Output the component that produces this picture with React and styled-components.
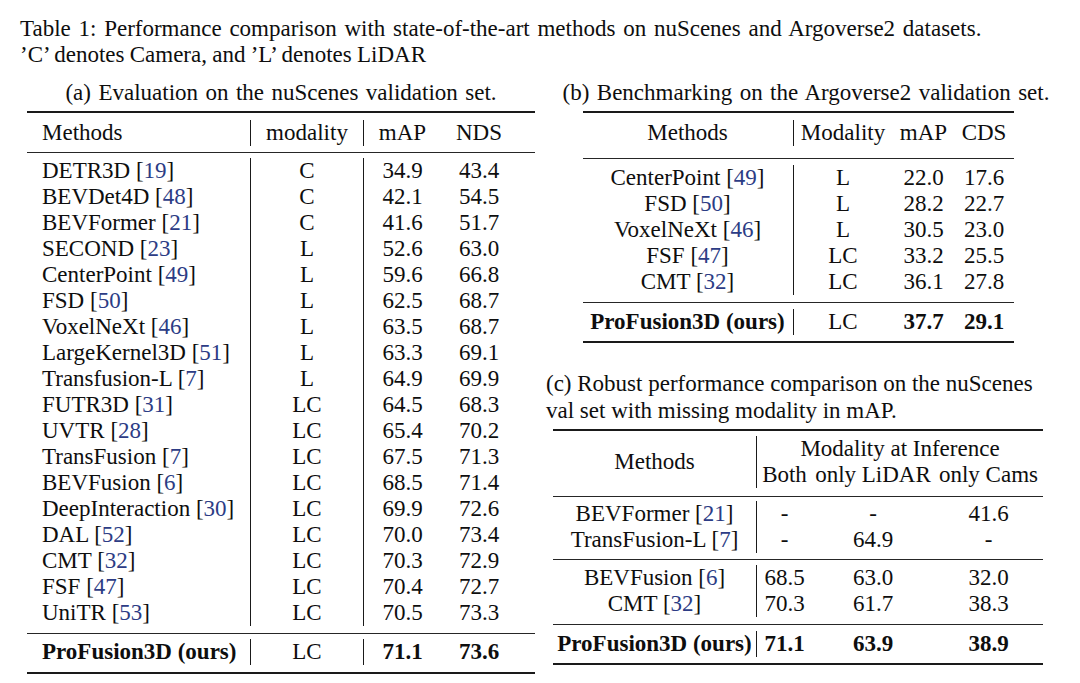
import React from 'react';
import styled, { createGlobalStyle } from 'styled-components';

const Global = createGlobalStyle`
  *, *::before, *::after { box-sizing: border-box; }
  html, body { margin: 0; padding: 0; background: #ffffff; }
  body {
    font-family: "Liberation Serif", "Times New Roman", serif;
    color: #0e0e0e;
    font-size: 23px;
    line-height: 26px;
  }
`;

const Page = styled.main`
  width: 1080px;
  height: 683px;
  padding: 16px 0 0 20px;
  overflow: hidden;
`;

const MainCaption = styled.div`
  margin: 0;
  white-space: nowrap;
`;

const CaptionLine = styled.div`
  word-spacing: ${p => p.$ws || 0}px;
`;

const Panels = styled.div`
  display: flex;
  align-items: flex-start;
  margin-top: 12px;
`;

const Panel = styled.section`
  width: ${p => p.$w}px;
  margin-left: ${p => p.$ml}px;
  display: flex;
  flex-direction: column;
  align-items: center;
`;

const SubCaption = styled.div`
  margin: ${p => p.$mt || 0}px 0 5px ${p => p.$ml || 0}px;
  white-space: nowrap;
  word-spacing: ${p => p.$ws || 0}px;
  line-height: ${p => p.$lh || 26}px;
  text-align: ${p => (p.$left ? 'left' : 'center')};
  align-self: ${p => (p.$left ? 'flex-start' : 'center')};
`;

const Table = styled.div`
  width: ${p => p.$w}px;
  border-top: 2px solid #1a1a1a;
  border-bottom: 2px solid #1a1a1a;
`;

const Section = styled.div`
  padding: ${p => p.$pt}px 0 ${p => p.$pb}px;
  & + & {
    border-top: 1px solid #262626;
  }
`;

const Row = styled.div`
  display: grid;
  grid-template-columns: ${p => p.$cols};
`;

const Cell = styled.div`
  white-space: nowrap;
  text-align: ${p => p.$align || 'center'};
  padding-left: ${p => p.$pl || 0}px;
  padding-right: ${p => p.$pr || 0}px;
  border-left: ${p => (p.$bar ? '1px solid #1a1a1a' : '0')};
  font-weight: ${p => (p.$bold ? 700 : 400)};
  grid-column: ${p => p.$col || 'auto'};
  grid-row: ${p => p.$row || 'auto'};
  align-self: ${p => p.$valign || 'stretch'};
`;

const Cite = styled.span`
  color: #2c3c85;
`;

const Method = ({ name, cite }) => (
  <>
    {name}
    {cite && (
      <>
        {' ['}
        <Cite>{cite}</Cite>
        {']'}
      </>
    )}
  </>
);

const nuScenes = [
  ['DETR3D', '19', 'C', '34.9', '43.4'],
  ['BEVDet4D', '48', 'C', '42.1', '54.5'],
  ['BEVFormer', '21', 'C', '41.6', '51.7'],
  ['SECOND', '23', 'L', '52.6', '63.0'],
  ['CenterPoint', '49', 'L', '59.6', '66.8'],
  ['FSD', '50', 'L', '62.5', '68.7'],
  ['VoxelNeXt', '46', 'L', '63.5', '68.7'],
  ['LargeKernel3D', '51', 'L', '63.3', '69.1'],
  ['Transfusion-L', '7', 'L', '64.9', '69.9'],
  ['FUTR3D', '31', 'LC', '64.5', '68.3'],
  ['UVTR', '28', 'LC', '65.4', '70.2'],
  ['TransFusion', '7', 'LC', '67.5', '71.3'],
  ['BEVFusion', '6', 'LC', '68.5', '71.4'],
  ['DeepInteraction', '30', 'LC', '69.9', '72.6'],
  ['DAL', '52', 'LC', '70.0', '73.4'],
  ['CMT', '32', 'LC', '70.3', '72.9'],
  ['FSF', '47', 'LC', '70.4', '72.7'],
  ['UniTR', '53', 'LC', '70.5', '73.3'],
];

const argo = [
  ['CenterPoint', '49', 'L', '22.0', '17.6'],
  ['FSD', '50', 'L', '28.2', '22.7'],
  ['VoxelNeXt', '46', 'L', '30.5', '23.0'],
  ['FSF', '47', 'LC', '33.2', '25.5'],
  ['CMT', '32', 'LC', '36.1', '27.8'],
];

const robustGroups = [
  [
    ['BEVFormer', '21', '-', '-', '41.6'],
    ['TransFusion-L', '7', '-', '64.9', '-'],
  ],
  [
    ['BEVFusion', '6', '68.5', '63.0', '32.0'],
    ['CMT', '32', '70.3', '61.7', '38.3'],
  ],
];

const COLS_A = '223px 113px 78px 94px';
const COLS_B = '210px 100px 62px 59px';
const COLS_C = '203px 56px 122px 109px';

const TableA = () => (
  <Table $w={508}>
    <Section $pt={7} $pb={6}>
      <Row $cols={COLS_A}>
        <Cell $align="left" $pl={15}>Methods</Cell>
        <Cell $bar>modality</Cell>
        <Cell $bar>mAP</Cell>
        <Cell $pr={18}>NDS</Cell>
      </Row>
    </Section>
    <Section $pt={5} $pb={7}>
      {nuScenes.map(([name, cite, mod, map, nds]) => (
        <Row $cols={COLS_A} key={name + cite}>
          <Cell $align="left" $pl={15}><Method name={name} cite={cite} /></Cell>
          <Cell $bar>{mod}</Cell>
          <Cell $bar>{map}</Cell>
          <Cell $pr={18}>{nds}</Cell>
        </Row>
      ))}
    </Section>
    <Section $pt={5} $pb={7}>
      <Row $cols={COLS_A}>
        <Cell $align="left" $pl={15} $bold>ProFusion3D (ours)</Cell>
        <Cell $bar>LC</Cell>
        <Cell $bar $bold>71.1</Cell>
        <Cell $pr={18} $bold>73.6</Cell>
      </Row>
    </Section>
  </Table>
);

const TableB = () => (
  <Table $w={431}>
    <Section $pt={7} $pb={12}>
      <Row $cols={COLS_B}>
        <Cell>Methods</Cell>
        <Cell $bar>Modality</Cell>
        <Cell>mAP</Cell>
        <Cell>CDS</Cell>
      </Row>
    </Section>
    <Section $pt={6} $pb={7}>
      {argo.map(([name, cite, mod, map, cds]) => (
        <Row $cols={COLS_B} key={name}>
          <Cell><Method name={name} cite={cite} /></Cell>
          <Cell $bar>{mod}</Cell>
          <Cell>{map}</Cell>
          <Cell>{cds}</Cell>
        </Row>
      ))}
    </Section>
    <Section $pt={6} $pb={6}>
      <Row $cols={COLS_B}>
        <Cell $bold>ProFusion3D (ours)</Cell>
        <Cell $bar>LC</Cell>
        <Cell $bold>37.7</Cell>
        <Cell $bold>29.1</Cell>
      </Row>
    </Section>
  </Table>
);

const TableC = () => (
  <Table $w={490}>
    <Section $pt={5} $pb={8}>
      <Row $cols={COLS_C}>
        <Cell $row="1 / 3" $valign="center">Methods</Cell>
        <Cell $bar $col="2 / 5">Modality at Inference</Cell>
        <Cell $bar>Both</Cell>
        <Cell>only LiDAR</Cell>
        <Cell>only Cams</Cell>
      </Row>
    </Section>
    {robustGroups.map((group, gi) => (
      <Section $pt={gi === 0 ? 4 : 5} $pb={gi === 0 ? 6 : 7} key={gi}>
        {group.map(([name, cite, both, lidar, cams]) => (
          <Row $cols={COLS_C} key={name}>
            <Cell><Method name={name} cite={cite} /></Cell>
            <Cell $bar>{both}</Cell>
            <Cell>{lidar}</Cell>
            <Cell>{cams}</Cell>
          </Row>
        ))}
      </Section>
    ))}
    <Section $pt={6} $pb={6}>
      <Row $cols={COLS_C}>
        <Cell $bold>ProFusion3D (ours)</Cell>
        <Cell $bar $bold>71.1</Cell>
        <Cell $bold>63.9</Cell>
        <Cell $bold>38.9</Cell>
      </Row>
    </Section>
  </Table>
);

export default function App() {
  return (
    <>
      <Global />
      <Page>
        <MainCaption>
          <CaptionLine $ws={2}>
            Table 1: Performance comparison with state-of-the-art methods on nuScenes and Argoverse2 datasets.
          </CaptionLine>
          <CaptionLine $ws={-0.5}>’C’ denotes Camera, and ’L’ denotes LiDAR</CaptionLine>
        </MainCaption>
        <Panels>
          <Panel $w={508} $ml={7}>
            <SubCaption $ws={1.7}>(a) Evaluation on the nuScenes validation set.</SubCaption>
            <TableA />
          </Panel>
          <Panel $w={504} $ml={11}>
            <SubCaption $ws={1.7} $ml={16}>(b) Benchmarking on the Argoverse2 validation set.</SubCaption>
            <TableB />
            <SubCaption $left $mt={27} $lh={27}>
              (c) Robust performance comparison on the nuScenes
              <br />
              val set with missing modality in mAP.
            </SubCaption>
            <TableC />
          </Panel>
        </Panels>
      </Page>
    </>
  );
}
